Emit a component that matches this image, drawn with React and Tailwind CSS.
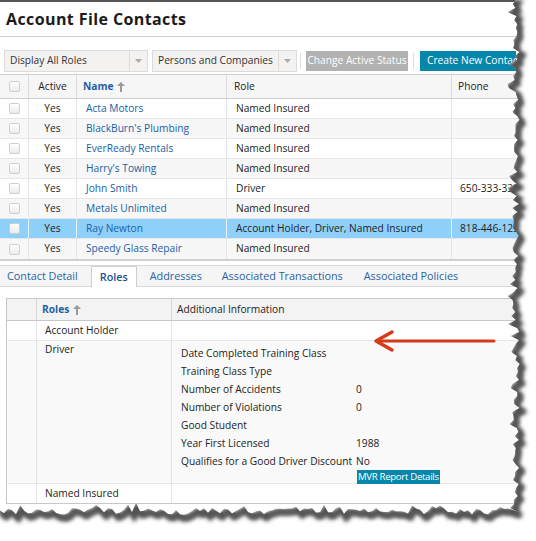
import React from "react";

const contacts = [
  { name: "Acta Motors", role: "Named Insured", phone: "" },
  { name: "BlackBurn's Plumbing", role: "Named Insured", phone: "" },
  { name: "EverReady Rentals", role: "Named Insured", phone: "" },
  { name: "Harry's Towing", role: "Named Insured", phone: "" },
  { name: "John Smith", role: "Driver", phone: "650-333-3333" },
  { name: "Metals Unlimited", role: "Named Insured", phone: "" },
  { name: "Ray Newton", role: "Account Holder, Driver, Named Insured", phone: "818-446-1234", selected: true },
  { name: "Speedy Glass Repair", role: "Named Insured", phone: "" },
];

const driverInfo = [
  ["Date Completed Training Class", ""],
  ["Training Class Type", ""],
  ["Number of Accidents", "0"],
  ["Number of Violations", "0"],
  ["Good Student", ""],
  ["Year First Licensed", "1988"],
  ["Qualifies for a Good Driver Discount", "No"],
];

const Check = () => (
  <div className="w-[11px] h-[11px] rounded-[2px] border border-[#cfcfcf] bg-gradient-to-b from-white to-[#ececec]" />
);

const SortArrow = () => (
  <svg width="8" height="10" viewBox="0 0 8 10" className="ml-[4px]">
    <path d="M4 0 L8 4 L5 4 L5 10 L3 10 L3 4 L0 4 Z" fill="#9a9a9a" />
  </svg>
);

const Select = ({ label, width }) => (
  <div className={`flex items-center h-[22px] border border-[#dcdcdc] bg-[#f3f2f0] ${width}`}>
    <span className="flex-1 pl-[5px] text-[#333] whitespace-nowrap overflow-hidden">{label}</span>
    <div className="w-[18px] h-full border-l border-[#dcdcdc] flex items-center justify-center">
      <svg width="7" height="4" viewBox="0 0 7 4"><path d="M0 0 H7 L3.5 4 Z" fill="#aaa" /></svg>
    </div>
  </div>
);

// torn paper edge along the right and bottom of the picture
function tornPath() {
  let seed = 7;
  const rnd = () => {
    seed = (seed * 9301 + 49297) % 233280;
    return seed / 233280;
  };
  const pts = [];
  for (let y = 0; y <= 512; y += 4) pts.push([512 + rnd() * 8 - (rnd() > 0.85 ? 5 : 0), y]);
  for (let x = 508; x >= 0; x -= 4) pts.push([x, 508 + rnd() * 7 - (rnd() > 0.85 ? 5 : 0)]);
  return pts;
}

const TornEdge = () => {
  const pts = tornPath();
  const line = pts.map((p, i) => `${i ? "L" : "M"}${p[0].toFixed(1)} ${p[1].toFixed(1)}`).join(" ");
  const outside = `${line} L0 541 L536 541 L536 0 Z`;
  const shadow = pts.map((p, i) => `${i ? "L" : "M"}${(p[0] + 3).toFixed(1)} ${(p[1] + 4).toFixed(1)}`).join(" ");
  return (
    <svg className="absolute inset-0 pointer-events-none" width="536" height="541">
      <defs>
        <filter id="blur" x="-10%" y="-10%" width="120%" height="120%">
          <feGaussianBlur stdDeviation="2.2" />
        </filter>
        <clipPath id="out"><path d={outside} /></clipPath>
      </defs>
      <path d={outside} fill="#fff" />
      <g clipPath="url(#out)">
        <path d={`${line} L0 480 L480 480 L480 0 Z`} fill="none" stroke="#444" strokeWidth="6" filter="url(#blur)" transform="translate(2 3)" />
        <path d={shadow} fill="none" stroke="#555" strokeWidth="4" filter="url(#blur)" />
      </g>
    </svg>
  );
};

const RedArrow = () => (
  <svg className="absolute left-[370px] top-[328px] pointer-events-none" width="130" height="26" viewBox="0 0 130 26">
    <path d="M124 13 H8" stroke="#d43a1c" strokeWidth="3" strokeLinecap="round" />
    <path d="M22 4 L6 13 L22 22" stroke="#d43a1c" strokeWidth="3.5" fill="none" strokeLinecap="round" strokeLinejoin="round" />
  </svg>
);

export default function App() {
  return (
    <div className="relative w-[536px] h-[541px] overflow-hidden bg-white text-[10.2px] text-[#222]" style={{ fontFamily: '"Open Sans", "Noto Sans", sans-serif' }}>
      <div className="border-t-2 border-[#555]" />
      {/* title */}
      <div className="h-[35px] flex items-center pl-[6px] border-b border-[#cfcfcf]">
        <h1 className="text-[16px] font-bold tracking-[0.4px] text-[#1b1b1b]">Account File Contacts</h1>
      </div>

      {/* toolbar */}
      <div className="flex items-end h-[36px] pl-[4px] pb-[2px] mt-[1px]">
        <Select label="Display All Roles" width="w-[144px]" />
        <div className="w-[4px]" />
        <Select label="Persons and Companies" width="w-[145px]" />
        <div className="w-px h-[16px] mb-[3px] bg-[#ddd] ml-[3px] mr-[5px]" />
        <div className="h-[20px] mb-px w-[102px] bg-[#b2b2b2] text-white flex items-center justify-center whitespace-nowrap">Change Active Status</div>
        <div className="w-px h-[16px] mb-[3px] bg-[#ddd] ml-[5px] mr-[6px]" />
        <div className="h-[20px] mb-px w-[96px] bg-[#0686ab] text-white flex items-center pl-[7px] whitespace-nowrap">Create New Contact</div>
      </div>

      {/* contacts table */}
      <div className="border-t border-b-2 border-[#d0d0d0]">
        <div className="grid grid-cols-[29px_48px_150px_225px_1fr] h-[24px] bg-[#f6f6f6] border-b border-[#cfcfcf]">
          <div className="flex items-center justify-center border-r border-[#ddd]"><Check /></div>
          <div className="flex items-center justify-center border-r border-[#ddd]">Active</div>
          <div className="flex items-center pl-[6px] border-r border-[#ddd] font-bold text-[#1f5fa6]">Name<SortArrow /></div>
          <div className="flex items-center pl-[7px] border-r border-[#ddd]">Role</div>
          <div className="flex items-center pl-[6px]">Phone</div>
        </div>
        {contacts.map((c, i) => (
          <div
            key={c.name}
            className={`grid grid-cols-[29px_48px_150px_225px_1fr] h-[20px] ${c.selected ? "bg-[#8fd0fa]" : i % 2 ? "bg-[#f7f7f7]" : "bg-white"} ${i < contacts.length - 1 ? "border-b border-[#e6e6e6]" : ""}`}
          >
            <div className={`flex items-center justify-center border-r ${c.selected ? "border-[#e8f4fb]" : "border-[#e4e4e4]"}`}><Check /></div>
            <div className={`flex items-center justify-center border-r ${c.selected ? "border-[#e8f4fb]" : "border-[#e4e4e4]"}`}>Yes</div>
            <div className={`flex items-center pl-[9px] border-r text-[#2060a8] ${c.selected ? "border-[#e8f4fb]" : "border-[#e4e4e4]"}`}>{c.name}</div>
            <div className={`flex items-center pl-[9px] border-r whitespace-nowrap ${c.selected ? "border-[#e8f4fb]" : "border-[#e4e4e4]"}`}>{c.role}</div>
            <div className="flex items-center pl-[8px] whitespace-nowrap">{c.phone}</div>
          </div>
        ))}
      </div>

      {/* tabs */}
      <div className="mt-[4px] h-[22px] bg-[#f5f5f5] border-t border-b border-[#d8d8d8] flex items-end text-[#2a62a6] text-[10.8px]">
        <div className="h-full flex items-center pl-[7px] pr-[13px]">Contact Detail</div>
        <div className="h-[21px] -mb-px px-[8px] bg-white border border-b-0 border-[#cfcfcf] flex items-center font-semibold text-[#1c4f8c]">Roles</div>
        <div className="h-full flex items-center pl-[13px] pr-[10px]">Addresses</div>
        <div className="h-full flex items-center px-[10px]">Associated Transactions</div>
        <div className="h-full flex items-center px-[11px]">Associated Policies</div>
      </div>

      {/* roles table */}
      <div className="mt-[11px] ml-[6px] w-[520px] border border-[#c8c8c8]">
        <div className="grid grid-cols-[30px_135px_1fr] h-[22px] bg-[#f3f3f3] border-b border-[#c8c8c8]">
          <div className="border-r border-[#d6d6d6]" />
          <div className="flex items-center pl-[5px] border-r border-[#d6d6d6] font-bold text-[#1f5fa6]">Roles<SortArrow /></div>
          <div className="flex items-center pl-[5px]">Additional Information</div>
        </div>
        <div className="grid grid-cols-[30px_135px_1fr] h-[20px] bg-white border-b border-[#e6e6e6]">
          <div className="border-r border-[#e4e4e4]" />
          <div className="flex items-center pl-[8px] border-r border-[#e4e4e4]">Account Holder</div>
          <div />
        </div>
        <div className="grid grid-cols-[30px_135px_1fr] h-[143px] bg-[#f9f9f9] border-b border-[#e6e6e6]">
          <div className="border-r border-[#e4e4e4]" />
          <div className="pl-[8px] pt-[1px] border-r border-[#e4e4e4]">Driver</div>
          <div className="pl-[9px] pt-[4px]">
            {driverInfo.map(([k, v]) => (
              <div key={k} className="flex h-[18px] items-center">
                <span className="w-[175px] whitespace-nowrap">{k}</span>
                <span>{v}</span>
              </div>
            ))}
            <div className="ml-[176px] mt-[-1px] w-fit h-[14px] px-[1px] bg-[#0686ab] text-white text-[9.6px] flex items-center tracking-[-0.3px]">MVR Report Details</div>
          </div>
        </div>
        <div className="grid grid-cols-[30px_135px_1fr] h-[19px] bg-white">
          <div className="border-r border-[#e4e4e4]" />
          <div className="flex items-center pl-[8px] border-r border-[#e4e4e4]">Named Insured</div>
          <div />
        </div>
      </div>

      <RedArrow />
      <TornEdge />
    </div>
  );
}
